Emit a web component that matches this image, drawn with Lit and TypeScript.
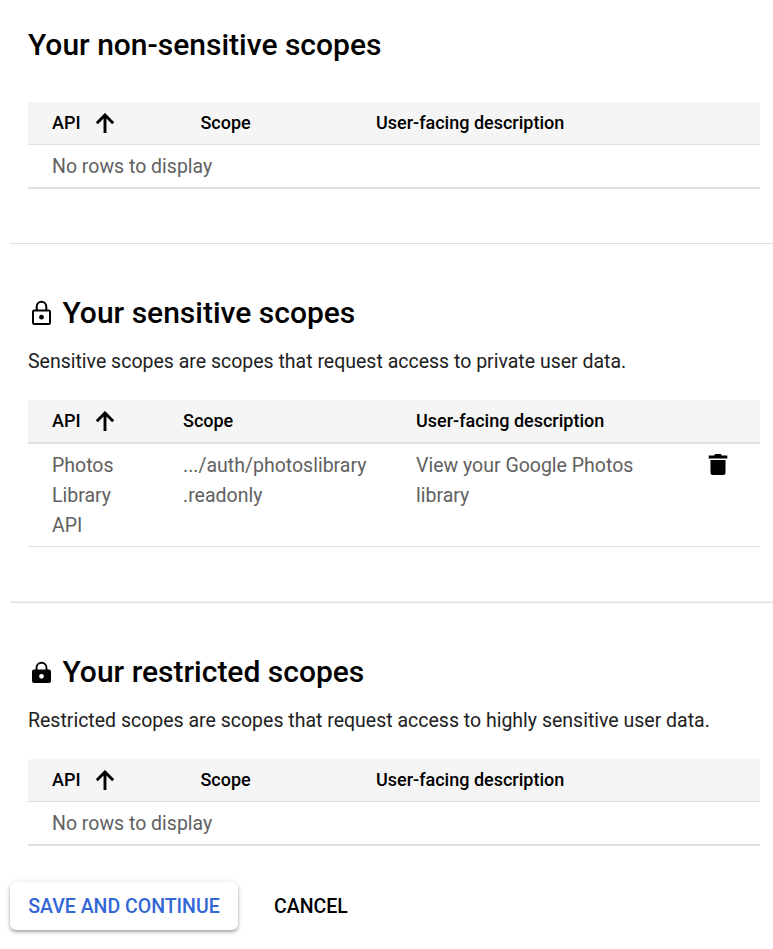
import { LitElement, html, css } from "lit";
import { customElement } from "lit/decorators.js";

const arrow = html`<svg class="arrow" viewBox="0 0 20 20" aria-hidden="true"><path d="M10 20V2.200M1.800 10.200L10 2l8.200 8.200" fill="none" stroke="currentColor" stroke-width="2.900"></path></svg>`;

const lockOutline = html`<svg class="lock" viewBox="0 0 26 26" aria-hidden="true">
  <path d="M8.700 10.500V6.600a4.800 4.800 0 0 1 9.600 0v3.900" fill="none" stroke="currentColor" stroke-width="2"></path>
  <rect x="5" y="10.400" width="17" height="13.600" rx="1.300" fill="none" stroke="currentColor" stroke-width="2"></rect>
  <circle cx="13.500" cy="17.200" r="2.400" fill="currentColor"></circle>
</svg>`;

const lockFilled = html`<svg class="lock" viewBox="0 0 26 26" aria-hidden="true">
  <path d="M8.500 11.500V8.700a5 4.900 0 0 1 10 0v2.800" fill="none" stroke="currentColor" stroke-width="1.900"></path>
  <path fill="currentColor" fill-rule="evenodd" d="M6 10.600h15a2 2 0 0 1 2 2V22a2 2 0 0 1-2 2H6a2 2 0 0 1-2-2v-9.400a2 2 0 0 1 2-2zM13.500 14.900a2.400 2.400 0 1 0 0 4.800 2.400 2.400 0 0 0 0-4.800z"></path>
</svg>`;

const trash = html`<svg class="trash" viewBox="0 0 20 21" aria-hidden="true"><path fill="currentColor" d="M7.200 0h5.600l1.100 1.400h5.400v3H.700v-3h5.400zM2.500 6h15v12.500a2.500 2.500 0 0 1-2.500 2.500H5a2.500 2.500 0 0 1-2.500-2.500z"></path></svg>`;

@customElement("app-root")
export class AppRoot extends LitElement {
  static styles = css`
    :host { display: block; height: 949px; overflow: hidden; background: #fff; color: #000; font: 19.5px/30px Roboto, sans-serif; }
    section { box-sizing: border-box; margin-left: 10px; padding: 0 13px 0 18px; border-bottom: 1px solid #e0e0e0; }
    .plain { height: 244px; padding-top: 25px; }
    .sensitive { height: 359px; padding-top: 49px; box-shadow: inset 0 -1px #f0f0f0; }
    .restricted { height: 279px; padding-top: 49px; border: 0; }
    h2 { display: flex; align-items: center; margin: 0; height: 40px; font-size: 30px; line-height: 40px; font-weight: 500; white-space: nowrap; }
    .plain h2 { margin-bottom: 37px; }
    p { margin: 14px 0 23px; height: 30px; white-space: nowrap; color: #212121; }
    .lock { width: 26px; height: 26px; margin-right: 8.5px; }
    .row { display: grid; grid-template-columns: 148.4px 175.6px 1fr; padding-left: 24px; box-sizing: border-box; }
    .wide { grid-template-columns: 131px 233px 1fr 55px; }
    .head { height: 43px; background: #f5f5f5; border-bottom: 1px solid #e0e0e0; font-size: 18px; line-height: 42px; font-weight: 500; }
    .head.wide { height: 44px; border-bottom-width: 2px; }
    .api { display: flex; align-items: center; }
    .arrow { width: 20px; height: 20px; margin-left: 14px; }
    .empty { height: 44px; padding: 7px 24px 5px; box-sizing: border-box; border-bottom: 2px solid #e0e0e0; color: #616161; }
    .data { height: 103px; padding-top: 7px; border-bottom: 1px solid #e0e0e0; color: #616161; }
    .trash { width: 20px; height: 21px; margin: 3px 0 0 2.5px; color: #000; }
    footer { display: flex; align-items: center; height: 48px; font-weight: 500; }
    button { box-sizing: border-box; height: 48px; font: inherit; border: 0; padding: 2px 0 0; background: none; color: #000; white-space: nowrap; }
    .save { width: 228px; margin: 0 36px 0 10px; border-radius: 6px; color: #3367d6; background: #fff; box-shadow: 0 2px 3px rgba(0,0,0,.28), 0 1px 6px rgba(0,0,0,.14); }
  `;

  header(wide = false) {
    return html`<div class="row head ${wide ? "wide" : ""}"><span class="api"><span>API</span>${arrow}</span><span>Scope</span><span>User-facing description</span></div>`;
  }

  render() {
    return html`
      <section class="plain"><h2>Your non-sensitive scopes</h2>${this.header()}<div class="empty">No rows to display</div></section>
      <section class="sensitive">
        <h2>${lockOutline}<span>Your sensitive scopes</span></h2>
        <p>Sensitive scopes are scopes that request access to private user data.</p>
        ${this.header(true)}
        <div class="row wide data"><span>Photos<br>Library<br>API</span><span>.../auth/photoslibrary<br>.readonly</span><span>View your Google Photos<br>library</span>${trash}</div>
      </section>
      <section class="restricted">
        <h2>${lockFilled}<span>Your restricted scopes</span></h2>
        <p>Restricted scopes are scopes that request access to highly sensitive user data.</p>
        ${this.header()}<div class="empty">No rows to display</div>
      </section>
      <footer><button class="save">SAVE AND CONTINUE</button><button>CANCEL</button></footer>`;
  }
}
